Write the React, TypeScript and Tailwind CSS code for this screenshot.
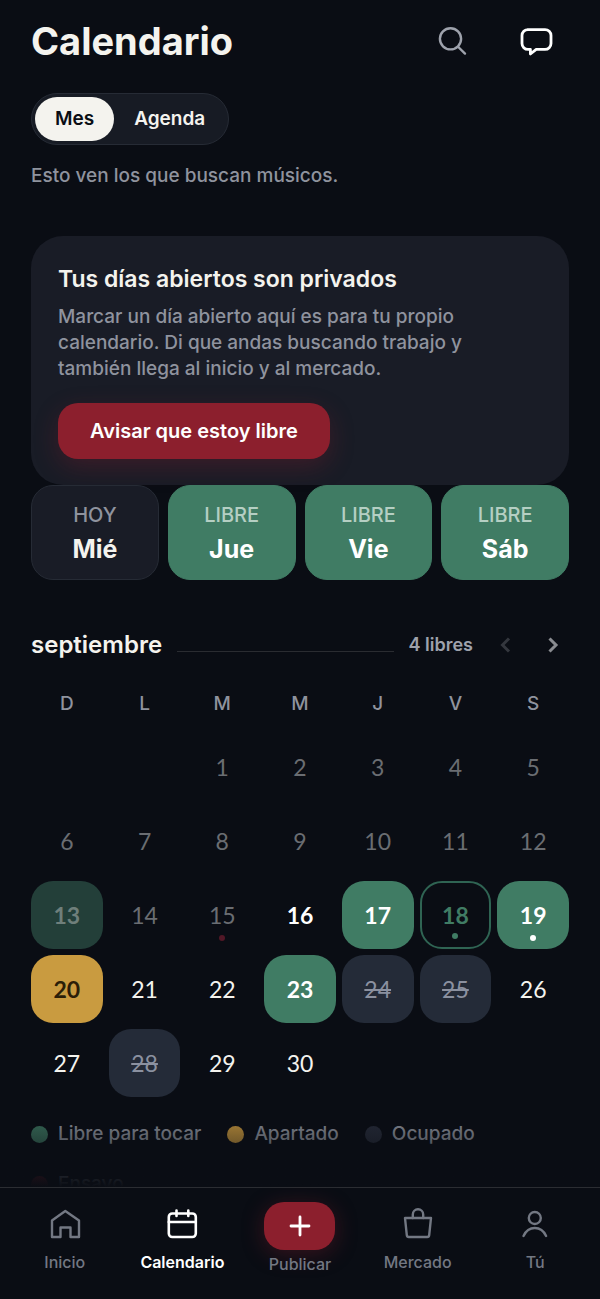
import React, { useState } from 'react';
import clsx from 'clsx';

type DayKind = 'past' | 'plain' | 'today' | 'open' | 'openPast' | 'outline' | 'held' | 'busy';

interface Day {
  n: number;
  kind: DayKind;
  dot?: string;
}

const WEEK = ['D', 'L', 'M', 'M', 'J', 'V', 'S'];

const NEXT_DAYS = [
  { label: 'HOY', day: 'Mié', open: false },
  { label: 'LIBRE', day: 'Jue', open: true },
  { label: 'LIBRE', day: 'Vie', open: true },
  { label: 'LIBRE', day: 'Sáb', open: true },
];

const SPECIAL: Record<number, Omit<Day, 'n'>> = {
  13: { kind: 'openPast' },
  15: { kind: 'past', dot: 'bg-[#521827]' },
  16: { kind: 'today' },
  17: { kind: 'open' },
  18: { kind: 'outline', dot: 'bg-[#407c64]' },
  19: { kind: 'open', dot: 'bg-white' },
  20: { kind: 'held' },
  23: { kind: 'open' },
  24: { kind: 'busy' },
  25: { kind: 'busy' },
  28: { kind: 'busy' },
};

const DAYS: Day[] = Array.from({ length: 30 }, (_, i) => {
  const n = i + 1;
  return { n, ...(SPECIAL[n] || { kind: n < 16 ? 'past' : 'plain' }) } as Day;
});

const KIND_CLASS: Record<DayKind, string> = {
  past: 'text-[#6a6d72]',
  plain: 'text-[#f4f3ee]',
  today: 'font-bold text-white',
  open: 'bg-[#407c64] font-bold text-white',
  openPast: 'bg-[#233f39] font-bold text-[#6f7f7b]',
  outline: 'border-2 border-[#2f6453] font-bold text-[#407c64]',
  held: 'bg-[#c99b40] font-bold text-[#2b1e08]',
  busy: 'bg-[#242b38] text-[#8b91a0] line-through',
};

const LEGEND = [
  { label: 'Libre para tocar', color: 'bg-[#407c64]' },
  { label: 'Apartado', color: 'bg-[#d9a441]' },
  { label: 'Ocupado', color: 'bg-[#2a2f3d]' },
  { label: 'Ensayo', color: 'bg-[#8c1f2d]' },
];

const Icon: React.FC<{ children: React.ReactNode; width?: number }> = ({ children, width = 2.4 }) => (
  <svg
    viewBox="0 0 36 36"
    className="size-9"
    fill="none"
    stroke="currentColor"
    strokeWidth={width}
    strokeLinecap="round"
    strokeLinejoin="round"
    aria-hidden="true"
  >
    {children}
  </svg>
);

const HomeIcon = () => (
  <Icon>
    <path d="M5 14.5 18.3 5 32 14.5V31H23.5V21.5H13.5V31H5Z" />
  </Icon>
);

const CalendarIcon = () => (
  <Icon width={2.6}>
    <rect x="4.8" y="7.5" width="27" height="23.5" rx="3.5" />
    <path d="M4.8 16H31.8M12.5 4.5v5.5M24.3 4.5v5.5" />
  </Icon>
);

const BagIcon = () => (
  <Icon>
    <path d="M5 12H31L29.2 29.2A2 2 0 0 1 27.2 31H8.8A2 2 0 0 1 6.8 29.2Z" />
    <path d="M12.8 12V8.5A5.2 5.2 0 0 1 23.2 8.5V12" />
  </Icon>
);

const UserIcon = () => (
  <Icon>
    <circle cx="17.8" cy="12" r="6" />
    <path d="M6.5 30C8.6 25.4 12.8 22 17.8 22S27 25.4 29.1 30" />
  </Icon>
);

const SearchIcon = () => (
  <Icon>
    <circle cx="16.5" cy="15.8" r="10.6" />
    <path d="M24.3 24 31 30.6" />
  </Icon>
);

const ChatIcon = () => (
  <Icon width={2.8}>
    <path d="M9.5 6.6H27A6 6 0 0 1 33 12.6V20.4A6 6 0 0 1 27 26.4H18.2L12.4 31V26.4H10A6 6 0 0 1 4 20.4V12.6A6 6 0 0 1 10 6.6Z" />
  </Icon>
);

const NAV = [
  { label: 'Inicio', icon: HomeIcon },
  { label: 'Calendario', icon: CalendarIcon },
  { label: 'Publicar', icon: null },
  { label: 'Mercado', icon: BagIcon },
  { label: 'Tú', icon: UserIcon },
];

const BottomNav: React.FC = () => (
  <nav className="grid grid-cols-5 border-t border-[#2b2d32] px-1.5 pt-3.5 pb-[21px]">
    {NAV.map(({ label, icon: Glyph }) =>
      Glyph ? (
        <a
          key={label}
          href={`#${label.toLowerCase()}`}
          className={clsx(
            'flex flex-col items-center gap-1 pt-1 text-base leading-8',
            label === 'Calendario' ? 'font-semibold text-white' : 'font-medium text-[#737883]'
          )}
        >
          <Glyph />
          {label}
        </a>
      ) : (
        <a key={label} href="#publicar" className="flex flex-col items-center text-base leading-7 font-medium text-[#737883]">
          <span className="flex h-12 w-[71px] items-center justify-center rounded-[20px] bg-[#8c1f2d] text-white shadow-[0_4px_22px_rgba(140,31,45,0.35)]">
            <Icon width={2.8}>
              <path d="M18 9v18M9 18h18" />
            </Icon>
          </span>
          {label}
        </a>
      )
    )}
  </nav>
);

export default function App() {
  const [view, setView] = useState('Mes');

  return (
    <div className="flex h-screen flex-col bg-[#0a0d14] font-['Inter','Liberation_Sans',sans-serif] text-[#f4f3ee]">
      <div className="relative flex min-h-0 flex-1 flex-col">
        <main className="flex-1 overflow-y-auto px-[31px] pt-[15px] [scrollbar-width:none]">
          <header className="flex items-center justify-between pr-[7px]">
            <h1 className="text-[38px] leading-[52px] font-bold">Calendario</h1>
            <div className="flex gap-8">
              <button aria-label="Buscar" className="flex h-[52px] w-[52px] items-center justify-center text-[#9ea2ac]">
                <SearchIcon />
              </button>
              <button aria-label="Mensajes" className="flex h-[52px] w-[52px] items-center justify-center text-white">
                <ChatIcon />
              </button>
            </div>
          </header>

          <div className="mt-[26px] flex w-fit rounded-[26px] border border-[#262b35] bg-[#171b24] p-[3px]">
            {['Mes', 'Agenda'].map((v) => (
              <button
                key={v}
                aria-pressed={view === v}
                onClick={() => setView(v)}
                className={clsx(
                  'h-11 rounded-[22px] px-5 text-[19px] font-semibold',
                  view === v ? 'bg-[#f4f3ee] text-[#0a0d14]' : 'text-[#f4f3ee]'
                )}
              >
                {v}
              </button>
            ))}
          </div>

          <p className="mt-[18px] text-[19px] leading-[26px] font-medium text-[#8f939e]">Esto ven los que buscan músicos.</p>

          <section className="mt-[47px] rounded-[32px] bg-[#191c26] px-[27px] pt-[26px] pb-[26px]">
            <h2 className="text-[23px] leading-[34px] font-semibold">Tus días abiertos son privados</h2>
            <p className="mt-2 max-w-[420px] text-[19px] leading-[26px] font-medium text-[#8f939e]">
              Marcar un día abierto aquí es para tu propio calendario. Di que andas buscando trabajo y también llega al inicio y al
              mercado.
            </p>
            <button className="mt-[21px] h-14 rounded-[20px] bg-[#8c1f2d] px-8 text-xl font-semibold text-white shadow-[0_8px_24px_rgba(140,31,45,0.3)]">
              Avisar que estoy libre
            </button>
          </section>

          <div className="grid grid-cols-4 gap-[9px]">
            {NEXT_DAYS.map((d) => (
              <button
                key={d.day}
                className={clsx(
                  'flex h-[95px] flex-col items-center justify-center rounded-[22px] border',
                  d.open ? 'border-[#407c64] bg-[#407c64] text-white' : 'border-[#262b35] bg-[#191c26]'
                )}
              >
                <span className={clsx('text-xl leading-8 font-medium', d.open ? 'text-[#b5cfc3]' : 'text-[#8f939e]')}>{d.label}</span>
                <span className="text-[25px] leading-9 font-bold">{d.day}</span>
              </button>
            ))}
          </div>

          <div className="mt-[43px] flex h-11 items-center">
            <h2 className="text-2xl font-semibold">septiembre</h2>
            <span className="mx-[15px] mt-3 h-px flex-1 bg-[#2a2c31]" />
            <span className="text-lg font-semibold text-[#9ea2ac]">4 libres</span>
            <button aria-label="Mes anterior" disabled className="ml-2 flex h-11 w-12 items-center justify-center text-[#34373e]">
              <svg viewBox="0 0 14 18" className="h-[18px] w-3.5" fill="none" stroke="currentColor" strokeWidth="3">
                <path d="M11 2.5 4.5 9l6.5 6.5" />
              </svg>
            </button>
            <button aria-label="Mes siguiente" className="-mr-2 flex h-11 w-12 items-center justify-center text-[#8a8c91]">
              <svg viewBox="0 0 14 18" className="h-[18px] w-3.5" fill="none" stroke="currentColor" strokeWidth="3">
                <path d="M3.5 2.5 10 9l-6.5 6.5" />
              </svg>
            </button>
          </div>

          <div className="mt-6 grid grid-cols-7 gap-x-1.5 text-center text-[19px] leading-[26px] font-medium text-[#8f939e]">
            {WEEK.map((w, i) => (
              <span key={i}>{w}</span>
            ))}
          </div>

          <div className="mt-4 grid grid-cols-7 gap-1.5 font-['Lato','Inter',sans-serif]">
            {DAYS.map((d) => (
              <button
                key={d.n}
                className={clsx(
                  'relative flex h-[68px] items-center justify-center rounded-[22px] text-[23px]',
                  KIND_CLASS[d.kind],
                  d.n === 1 && 'col-start-3'
                )}
              >
                {d.n}
                {d.dot ? <span className={clsx('absolute bottom-2 size-1.5 rounded-full', d.dot)} /> : null}
              </button>
            ))}
          </div>

          <ul className="mt-6 flex flex-wrap gap-x-[26px] gap-y-6 pb-24 text-[19px] leading-[26px] font-medium text-[#9ea2ac]">
            {LEGEND.map((l) => (
              <li key={l.label} className="flex items-center gap-2.5">
                <span className={clsx('size-[17px] rounded-full', l.color)} />
                {l.label}
              </li>
            ))}
          </ul>
        </main>
        <div className="pointer-events-none absolute inset-x-0 bottom-0 h-[88px] bg-linear-to-t from-[#0a0d14] to-transparent" />
      </div>
      <BottomNav />
    </div>
  );
}
